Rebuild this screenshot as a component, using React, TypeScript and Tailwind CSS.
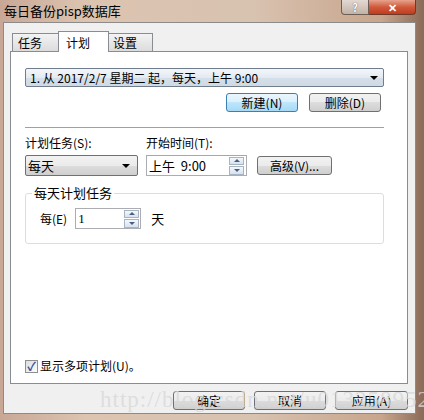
import React from "react";

const cjk = "font-['SimSun','Noto_Sans_CJK_SC',sans-serif]";

function Btn({ label, primary = false, w = "w-[72px]" }: { label: string; primary?: boolean; w?: string }) {
  return (
    <div
      className={`${w} h-[19px] flex items-center justify-center rounded-[3px] border text-[12px] text-black ${
        primary
          ? "border-[#3c7fb1] bg-[linear-gradient(#eaf6fd,#d9f0fc_50%,#bee6fd_50%,#a7d9f5)]"
          : "border-[#707070] bg-[linear-gradient(#f2f2f2,#ebebeb_50%,#dddddd_50%,#cfcfcf)]"
      }`}
    >
      {label}
    </div>
  );
}

function Arrow() {
  return <div className="w-0 h-0 border-l-[4px] border-r-[4px] border-t-[4px] border-l-transparent border-r-transparent border-t-black" />;
}

function Spinner() {
  return (
    <div className="flex flex-col w-[15px] h-[18px] gap-[1px]">
      {["up", "down"].map((d) => (
        <div
          key={d}
          className="flex-1 flex items-center justify-center border border-[#a7b4c4] bg-[linear-gradient(#f4f8fc,#d6e2ee)]"
        >
          <div
            className={`w-0 h-0 border-l-[3px] border-r-[3px] border-l-transparent border-r-transparent ${
              d === "up" ? "border-b-[3px] border-b-[#4a5d80]" : "border-t-[3px] border-t-[#4a5d80]"
            }`}
          />
        </div>
      ))}
    </div>
  );
}

export default function App() {
  return (
    <div
      className={`relative w-[424px] h-[420px] overflow-hidden flex flex-col bg-[linear-gradient(90deg,#c9a796,#dcc4b0_20%,#d8c2b0_60%,#c8a58c_90%,#8a6a58)] ${cjk}`}
    >
      {/* title bar */}
      <div className="h-[22px] flex items-start justify-between pl-[4px] pr-[8px]">
        <span className="text-[13px] leading-[16px] mt-[3px] text-black">每日备份pisp数据库</span>
        <div className="flex">
          <div className="w-[28px] h-[15px] flex items-center justify-center rounded-bl-[4px] border border-[#6d5e55] border-t-0 bg-[linear-gradient(#e3d9d2,#c2b2a7)] text-[11px] leading-none font-bold text-white [text-shadow:0_0_1px_#333]">
            ?
          </div>
          <div className="w-[47px] h-[15px] flex items-center justify-center rounded-br-[4px] border border-[#6d3a2a] border-t-0 border-l-0 bg-[linear-gradient(#e8a38e,#d05a3c_50%,#c23b1d)] text-[11px] font-bold text-white leading-none">
            ✕
          </div>
        </div>
      </div>

      {/* client area */}
      <div className="ml-[3px] mr-[8px] mb-[6px] flex-1 flex flex-col bg-[#f0f0f0] border border-[#8b8b8b] pl-[6px] pr-[7px] pt-[7px]">
        {/* tabs */}
        <div className="flex items-end h-[21px] pl-[2px] text-[12px]">
          <div className="w-[46px] h-[18px] flex items-center pl-[5px] border border-[#898c95] border-b-0 border-r-0 bg-[linear-gradient(#f3f3f3,#dcdcdc)]">
            任务
          </div>
          <div className="relative z-10 w-[51px] h-[21px] -mb-[1px] flex items-start pt-[2px] pl-[7px] border border-[#898c95] border-b-0 bg-white">
            计划
          </div>
          <div className="w-[44px] h-[18px] flex items-center pl-[4px] border border-[#898c95] border-b-0 border-l-0 bg-[linear-gradient(#f3f3f3,#dcdcdc)]">
            设置
          </div>
        </div>

        {/* tab page */}
        <div className="h-[333px] border border-[#898c95] bg-white pl-[14px] pr-[24px] pt-[16px] flex flex-col text-[12px] text-black">
          <div className="w-[359px] h-[19px] flex items-center justify-between pl-[4px] pr-[5px] rounded-[2px] border border-[#707d8c] bg-[linear-gradient(#f4f7fa,#e3eaf1_50%,#d5dfe9_50%,#cfdae5)]">
            <span className="whitespace-pre">1. 从 2017/2/7 星期二 起，每天，上午 9:00</span>
            <Arrow />
          </div>

          <div className="w-[356px] flex justify-end gap-[11px] mt-[6px]">
            <Btn label="新建(N)" primary />
            <Btn label="删除(D)" />
          </div>

          <div className="w-[359px] h-px bg-[#a0a0a0] mt-[15px]" />

          <div className="flex mt-[7px] leading-[15px]">
            <span className="w-[121px]">计划任务(S):</span>
            <span>开始时间(T):</span>
          </div>

          <div className="flex items-center mt-[5px]">
            <div className="w-[113px] h-[21px] flex items-center justify-between pl-[2px] pr-[7px] rounded-[2px] border border-[#707070] bg-[linear-gradient(#f2f2f2,#ebebeb_50%,#dddddd_50%,#cfcfcf)] text-[13px]">
              <span>每天</span>
              <Arrow />
            </div>
            <div className="ml-[8px] w-[101px] h-[21px] flex items-center justify-between pl-[2px] pr-[2px] border border-[#abadb3] border-t-[#a3a8b0] bg-white">
              <span className="whitespace-pre text-[13px]">上午  9:00</span>
              <Spinner />
            </div>
            <div className="ml-[10px]">
              <Btn label="高级(V)..." w="w-[75px]" />
            </div>
          </div>

          <div className="relative mt-[17px] w-[359px] h-[51px] rounded-[3px] border border-[#d5dfe5] flex items-center pl-[14px]">
            <span className="absolute -top-[8px] left-[6px] px-[2px] bg-white leading-[14px] text-[13px]">每天计划任务</span>
            <span>每(E)</span>
            <div className="ml-[8px] w-[66px] h-[21px] flex items-center justify-between pl-[2px] pr-[1px] border border-[#abadb3] bg-white">
              <span className="font-['Liberation_Serif',serif] text-[13px]">1</span>
              <Spinner />
            </div>
            <span className="ml-[10px] text-[13px]">天</span>
          </div>

          <div className="flex items-center mt-[113px]">
            <div className="w-[13px] h-[13px] border border-[#8e8f8f] bg-[linear-gradient(135deg,#dcdcdc,#fefefe)] flex items-center justify-center text-[12px] leading-none text-[#2c4f9e] font-bold">
              ✓
            </div>
            <span className="ml-[2px]">显示多项计划(U)。</span>
          </div>
        </div>

        {/* dialog buttons */}
        <div className="flex justify-end gap-[9px] mt-[7px]">
          <Btn label="确定" w="w-[72px]" />
          <Btn label="取消" w="w-[72px]" />
          <Btn label="应用(A)" w="w-[73px]" />
        </div>
      </div>

      {/* watermark */}
      <div className="pointer-events-none absolute left-[100px] top-[383px] text-[23px] font-['Liberation_Serif',serif] text-[#d8d8d8]/80 whitespace-nowrap tracking-[1px]">
        http://blog.csdn.net/u013258952
      </div>
    </div>
  );
}
